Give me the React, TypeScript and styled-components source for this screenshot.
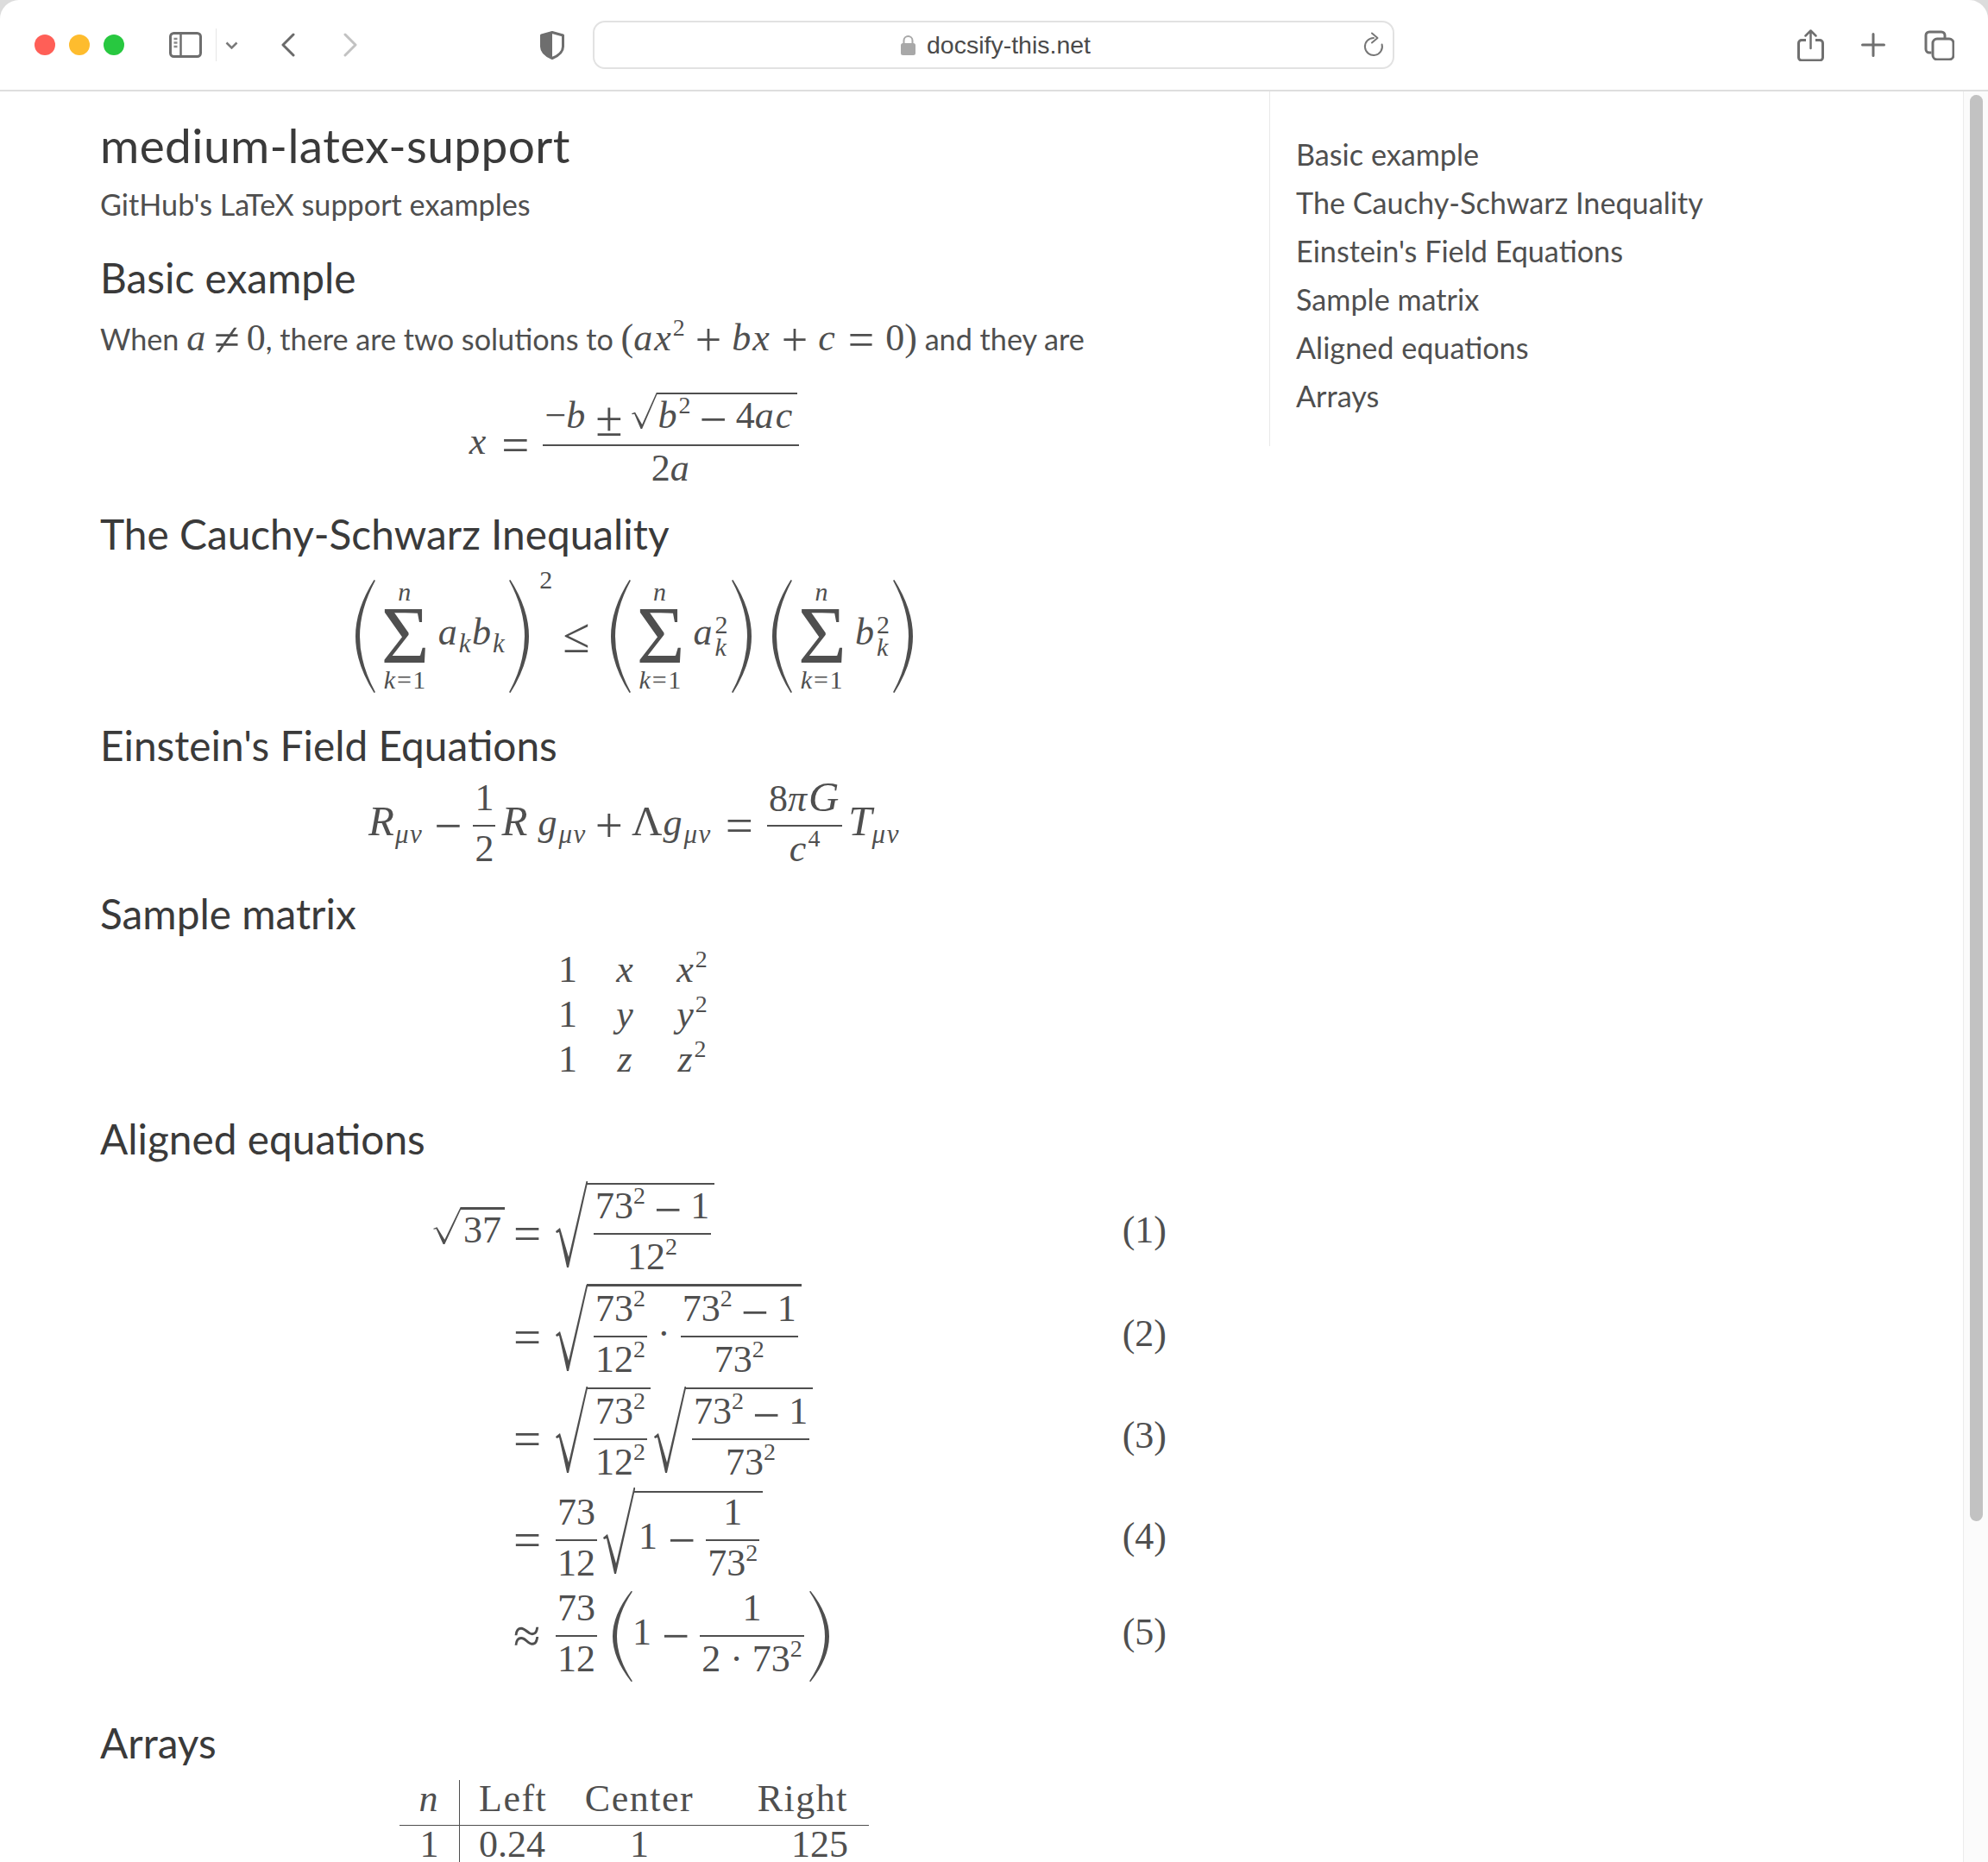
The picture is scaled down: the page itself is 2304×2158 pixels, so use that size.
import React from "react";
import styled, { createGlobalStyle } from "styled-components";

const GlobalStyle = createGlobalStyle`
  html, body {
    margin: 0;
    padding: 0;
    background: #dcdcdc;
  }
`;

const ink = "#4f4f4f";
const textFont = `Lato, "Noto Sans", sans-serif`;
const mathFont = `"Liberation Serif", serif`;

const Page = styled.div`
  width: 2304px;
  height: 2158px;
  overflow: hidden;
  display: flex;
  flex-direction: column;
  background: #fff;
  border-radius: 22px 22px 0 0;
  font-family: ${textFont};
  color: ${ink};
`;

/* browser chrome */
const Toolbar = styled.header`
  flex: none;
  height: 104px;
  box-sizing: content-box;
  border-bottom: 2px solid #dedede;
  display: flex;
  align-items: center;
  padding: 0 39px 0 40px;
`;

const Lights = styled.div`
  display: flex;
  gap: 16px;
`;

const Light = styled.span<{ $color: string }>`
  width: 24px;
  height: 24px;
  border-radius: 50%;
  background: ${(p) => p.$color};
`;

const ToolIcon = styled.svg<{ $left: number }>`
  flex: none;
  margin-left: ${(p) => p.$left}px;
  display: block;
`;

const UrlBar = styled.div`
  flex: none;
  width: 929px;
  height: 56px;
  box-sizing: border-box;
  margin-left: 33px;
  padding-left: 5px;
  border: 2px solid #e2e2e2;
  border-radius: 14px;
  display: flex;
  align-items: center;
  position: relative;
  justify-content: center;
  gap: 13px;
  font-family: "Liberation Sans", sans-serif;
  font-size: 28.5px;
  color: #4a4a4a;
`;

const ReloadWrap = styled.span`
  position: absolute;
  right: 9px;
  top: 9px;
  line-height: 0;
`;

const ToolRight = styled.div`
  margin-left: auto;
  display: flex;
  align-items: center;
`;

/* page */
const Body = styled.div`
  flex: 1;
  display: flex;
  min-height: 0;
`;

const Content = styled.main`
  flex: none;
  width: 1471px;
  box-sizing: border-box;
  padding: 32px 117px 0 116px;
`;

const Title = styled.h1`
  margin: 0 0 17px;
  font-weight: 400;
  font-size: 55px;
  letter-spacing: 0.4px;
  line-height: 60px;
  color: #3a3a3a;
`;

const Subtitle = styled.p`
  margin: 0;
  font-size: 34.2px;
  line-height: 44px;
`;

const Heading = styled.h2<{ $top: number }>`
  margin: ${(p) => p.$top}px 0 0;
  font-weight: 400;
  font-size: 47.8px;
  line-height: 50px;
  color: #3a3a3a;
`;

const Para = styled.p`
  margin: 21px 0 0;
  font-size: 34.2px;
  line-height: 50px;
  white-space: nowrap;
`;

const Toc = styled.nav`
  flex: none;
  align-self: flex-start;
  width: 804px;
  height: 411px;
  box-sizing: border-box;
  padding: 45px 0 0 30px;
  border-left: 1px solid #e8e8e8;
`;

const TocLink = styled.div`
  font-size: 34.2px;
  line-height: 56px;
`;

const Track = styled.div`
  flex: none;
  width: 29px;
  box-sizing: border-box;
  padding: 4px 6px 0 7px;
  background: #fbfbfb;
  border-left: 1px solid #ececec;
`;

const Thumb = styled.div`
  height: 1653px;
  border-radius: 8px;
  background: #c2c2c2;
`;

/* math parts */
const Display = styled.div<{ $h: number; $top: number }>`
  margin-top: ${(p) => p.$top}px;
  height: ${(p) => p.$h}px;
  display: flex;
  align-items: center;
  justify-content: center;
  font-family: ${mathFont};
  font-size: 44px;
  color: ${ink};
`;

const Run = styled.span<{ $left?: number }>`
  display: block;
  flex: none;
  line-height: 44px;
  padding-bottom: 8px;
  padding-left: ${(p) => p.$left ?? 0}px;
  white-space: nowrap;
`;

const I = styled.i`
  font-style: italic;
  letter-spacing: 2px;
`;

const Cap = styled.i<{ $ls: number }>`
  font-style: italic;
  font-size: 49px;
  letter-spacing: ${(p) => p.$ls}px;
`;

const UprightCap = styled.span`
  font-size: 49px;
  letter-spacing: 1px;
`;

const Sup = styled.sup`
  font-size: 28px;
  vertical-align: 17px;
  line-height: 0;
`;

const Sub = styled.sub`
  font-size: 31px;
  font-style: italic;
  letter-spacing: 1.5px;
  vertical-align: -9px;
  line-height: 0;
`;

const Op = styled.span<{ $gap: number }>`
  display: block;
  flex: none;
  font-size: 57px;
  line-height: 44px;
  margin: 0 ${(p) => p.$gap}px;
`;

const Frac = styled.span`
  display: inline-flex;
  flex: none;
  flex-direction: column;
  align-items: stretch;
`;

const Num = styled.span<{ $pad?: number }>`
  display: flex;
  justify-content: center;
  align-items: center;
  height: 56px;
  padding: 0 2px ${(p) => p.$pad ?? 0}px;
  box-sizing: border-box;
  border-bottom: 2px solid ${ink};
  margin-bottom: -1px;
`;

const Den = styled.span`
  display: flex;
  justify-content: center;
  align-items: flex-start;
  height: 56px;
  box-sizing: border-box;
  padding: 5px 2px 0;
`;

const SurdSvg = styled.svg<{ $lift: number }>`
  display: block;
  flex: none;
  margin-bottom: ${(p) => p.$lift * 2}px;
`;

const SqrtBox = styled.span<{ $left: number }>`
  display: inline-flex;
  flex: none;
  align-items: center;
  margin-left: ${(p) => p.$left}px;
`;

const Radicand = styled.span<{ $over: number; $pad: number }>`
  position: relative;
  display: flex;
  align-items: center;
  padding: 0 4px 0 ${(p) => p.$pad}px;

  &::before {
    content: "";
    position: absolute;
    left: -1px;
    right: 0;
    top: ${(p) => p.$over}px;
    height: 2.5px;
    background: ${ink};
  }
`;

const Sqrt: React.FC<{
  w?: number;
  h?: number;
  lift?: number;
  over?: number;
  pad?: number;
  left?: number;
  children: React.ReactNode;
}> = ({ w = 37, h = 100, lift = 11, over = -4, pad = 7, left = 0, children }) => (
  <SqrtBox $left={left}>
    <SurdSvg $lift={lift} width={w} height={h} viewBox="0 0 37 100" preserveAspectRatio="none">
      <path d="M0 58 L5 54 L15 88 L35.5 0 L37 0 L37 2 L15 100 L13 100 L4 59 L1 60 Z" fill={ink} />
    </SurdSvg>
    <Radicand $over={over} $pad={pad}>
      {children}
    </Radicand>
  </SqrtBox>
);

const ParenSvg = styled.svg<{ $flip?: boolean; $left: number; $right: number }>`
  display: block;
  flex: none;
  margin: 0 ${(p) => p.$right}px 0 ${(p) => p.$left}px;
  transform: ${(p) => (p.$flip ? "scaleX(-1)" : "none")};
`;

const Paren: React.FC<{ h: number; flip?: boolean; left?: number; right?: number }> = ({
  h,
  flip,
  left = 0,
  right = 0,
}) => (
  <ParenSvg $flip={flip} $left={left} $right={right} width={23} height={h} viewBox="0 0 23 100" preserveAspectRatio="none">
    <path d="M21.5 0 Q0 26 0 50 Q0 74 21.5 100 L23 99.5 Q5 74 5 50 Q5 26 23 .5 Z" fill={ink} />
  </ParenSvg>
);

const SumBox = styled.span`
  display: flex;
  flex: none;
  flex-direction: column;
  align-items: center;
  width: 60px;
  margin: 0 8px 0 5px;
`;

const SumLimit = styled.span`
  font-size: 30px;
  line-height: 30px;
  letter-spacing: 1.5px;
  white-space: nowrap;
`;

const SumGlyph = styled.span`
  font-size: 96px;
  line-height: 72px;
`;

const Sum: React.FC = () => (
  <SumBox>
    <SumLimit>
      <I>n</I>
    </SumLimit>
    <SumGlyph>Σ</SumGlyph>
    <SumLimit>
      <I>k</I>=1
    </SumLimit>
  </SumBox>
);

const Outer2 = styled.span`
  display: block;
  flex: none;
  font-size: 30px;
  line-height: 30px;
  margin: -10px 12px 0 12px;
  align-self: flex-start;
`;

const ScriptStack = styled.span`
  display: flex;
  flex: none;
  flex-direction: column;
  font-size: 30px;
  line-height: 26px;
  font-style: normal;
  margin-left: 1px;
`;

const InlineMath = styled.span`
  font-family: ${mathFont};
  font-size: 44px;
  line-height: 0;
  white-space: nowrap;
`;

const InlineOp = styled.span<{ $gap: number }>`
  font-size: 54px;
  line-height: 0;
  vertical-align: -6px;
  margin: 0 ${(p) => p.$gap}px;
`;

const InlineSup = styled.sup`
  font-size: 28px;
  line-height: 0;
  vertical-align: 17px;
`;

const Matrix = styled.div`
  margin-top: 14px;
  height: 156px;
  display: grid;
  grid-template-columns: 68px 66px 88px;
  grid-auto-rows: 52px;
  justify-content: center;
  justify-items: center;
  align-items: center;
  font-family: ${mathFont};
  font-size: 44px;
  line-height: 44px;
`;

const AlignedGrid = styled.div`
  margin-top: 25px;
  display: grid;
  grid-template-columns: 479px 1fr auto;
  grid-template-rows: 120px 119px 118px 116px 106px;
  column-gap: 0;
  align-items: center;
  font-family: ${mathFont};
  font-size: 44px;
`;

const Lhs = styled.div`
  display: flex;
  justify-content: flex-end;
  align-items: center;
  padding-right: 10px;
`;

const Rhs = styled.div`
  display: flex;
  align-items: center;
`;

const Tag = styled.div`
  line-height: 44px;
  padding-bottom: 8px;
  padding-right: 2px;
`;

const RelCell = styled.span`
  display: block;
  flex: none;
  width: 49px;
  font-size: 57px;
  line-height: 44px;
`;

const CdotRun = styled(Run)`
  padding-left: 12px;
  padding-right: 12px;
`;

const ArrayTable = styled.div`
  margin-top: 18px;
  display: grid;
  grid-template-columns: 70px 122px 172px 156px 24px;
  grid-template-rows: 53px 50px;
  justify-content: start;
  margin-left: 347px;
  font-family: ${mathFont};
  font-size: 44px;
  line-height: 44px;
`;

const ACell = styled.div<{ $align: string; $head?: boolean; $rule?: boolean; $pad?: number }>`
  text-align: ${(p) => p.$align};
  border-bottom: ${(p) => (p.$head ? `1.5px solid ${ink}` : "none")};
  border-right: ${(p) => (p.$rule ? `1.5px solid ${ink}` : "none")};
  padding-left: ${(p) => p.$pad ?? 0}px;
  letter-spacing: ${(p) => (p.$head ? "1.5px" : "0")};
  white-space: nowrap;
`;

const tocItems = [
  "Basic example",
  "The Cauchy-Schwarz Inequality",
  "Einstein's Field Equations",
  "Sample matrix",
  "Aligned equations",
  "Arrays",
];

const N7 = (
  <>
    73<Sup>2</Sup>
  </>
);
const N12 = (
  <>
    12<Sup>2</Sup>
  </>
);

const Frac732: React.FC = () => (
  <Frac>
    <Num>
      <Run>{N7}</Run>
    </Num>
    <Den>
      <Run>{N12}</Run>
    </Den>
  </Frac>
);

const FracMinus: React.FC<{ den: React.ReactNode }> = ({ den }) => (
  <Frac>
    <Num>
      <Run>{N7}</Run>
      <Op $gap={10}>−</Op>
      <Run>1</Run>
    </Num>
    <Den>
      <Run>{den}</Run>
    </Den>
  </Frac>
);

const Frac7312: React.FC = () => (
  <Frac>
    <Num>
      <Run>73</Run>
    </Num>
    <Den>
      <Run>12</Run>
    </Den>
  </Frac>
);

const App: React.FC = () => {
  return (
    <Page>
      <GlobalStyle />
      <Toolbar>
        <Lights>
          <Light $color="#ff5f57" />
          <Light $color="#febc2e" />
          <Light $color="#28c840" />
        </Lights>
        <ToolIcon $left={52} width="38" height="30" viewBox="0 0 38 30" fill="none">
          <rect x="1.5" y="1.5" width="35" height="27" rx="4" stroke="#6e6e6e" strokeWidth="3" />
          <path d="M13.5 2v26" stroke="#6e6e6e" strokeWidth="2.5" />
          <path d="M5.5 8h4M5.5 12.5h4M5.5 17h4" stroke="#8a8a8a" strokeWidth="2.5" />
        </ToolIcon>
        <ToolIcon $left={16} width="1" height="38" viewBox="0 0 1 38">
          <rect width="1" height="38" fill="#e6e6e6" />
        </ToolIcon>
        <ToolIcon $left={10} width="15" height="9" viewBox="0 0 15 9" fill="none">
          <path d="M1.5 1.5 7.5 7.5 13.5 1.5" stroke="#7a7a7a" strokeWidth="2.5" />
        </ToolIcon>
        <ToolIcon $left={49} width="17" height="28" viewBox="0 0 17 28" fill="none">
          <path d="M15 2 3 14l12 12" stroke="#6a6a6a" strokeWidth="3" strokeLinecap="round" strokeLinejoin="round" />
        </ToolIcon>
        <ToolIcon $left={56} width="17" height="28" viewBox="0 0 17 28" fill="none">
          <path d="M2 2l12 12L2 26" stroke="#c2c2c2" strokeWidth="3" strokeLinecap="round" strokeLinejoin="round" />
        </ToolIcon>
        <ToolIcon $left={211} width="28" height="33" viewBox="0 0 28 33" fill="none">
          <path d="M14 1.5 26.5 5v13c0 6-5 10.5-12.5 13.5C6.5 28.5 1.5 24 1.5 18V5z" stroke="#6e6e6e" strokeWidth="3" strokeLinejoin="round" />
          <path d="M14 1.5 1.5 5v13C1.5 24 6.5 28.5 14 31.5z" fill="#6e6e6e" />
        </ToolIcon>
        <UrlBar>
          <svg width="17" height="23" viewBox="0 0 17 23" fill="none">
            <rect x="0" y="9" width="17" height="14" rx="2.5" fill="#a8a8a8" />
            <path d="M3.5 10V6a5 5 0 0 1 10 0v4" stroke="#a8a8a8" strokeWidth="2" />
          </svg>
          <span>docsify-this.net</span>
          <ReloadWrap>
            <svg width="26" height="32" viewBox="0 0 26 32" fill="none">
              <path d="M13 9A10 10 0 1 0 22.6 16.5" stroke="#777" strokeWidth="2" strokeLinecap="round" />
              <path d="M11 3.5 17.5 9 11 14.5" stroke="#777" strokeWidth="2" strokeLinecap="round" strokeLinejoin="round" />
            </svg>
          </ReloadWrap>
        </UrlBar>
        <ToolRight>
          <ToolIcon $left={0} width="31" height="37" viewBox="0 0 31 37" fill="none">
            <path d="M10 12.5H5A3.5 3.5 0 0 0 1.5 16v16.500A3.5 3.5 0 0 0 5 36h21a3.5 3.5 0 0 0 3.5-3.5V16a3.5 3.5 0 0 0-3.5-3.5h-5" stroke="#707070" strokeWidth="3" />
            <path d="M15.5 22V2M9.5 7.5l6-6 6 6" stroke="#707070" strokeWidth="2.5" strokeLinecap="round" strokeLinejoin="round" />
          </ToolIcon>
          <ToolIcon $left={43} width="28" height="28" viewBox="0 0 28 28" fill="none">
            <path d="M14 1.5v25M1.5 14h25" stroke="#707070" strokeWidth="3" strokeLinecap="round" />
          </ToolIcon>
          <ToolIcon $left={45} width="35" height="35" viewBox="0 0 35 35" fill="none">
            <path d="M8.5 26H6a4 4 0 0 1-4-4V6a4 4 0 0 1 4-4h14a4 4 0 0 1 4 4v3.5" stroke="#707070" strokeWidth="3" />
            <rect x="10" y="10" width="24" height="24" rx="5" stroke="#707070" strokeWidth="3" />
          </ToolIcon>
        </ToolRight>
      </Toolbar>

      <Body>
        <Content>
          <Title>medium-latex-support</Title>
          <Subtitle>GitHub's LaTeX support examples</Subtitle>

          <Heading $top={38}>Basic example</Heading>
          <Para>
            When{" "}
            <InlineMath>
              <I>a</I>
              <InlineOp $gap={8}>≠</InlineOp>0
            </InlineMath>
            , there are two solutions to{" "}
            <InlineMath>
              (<I>ax</I>
              <InlineSup>2</InlineSup>
              <InlineOp $gap={12}>+</InlineOp>
              <I>bx</I>
              <InlineOp $gap={12}>+</InlineOp>
              <I>c</I>
              <InlineOp $gap={13}>=</InlineOp>0)
            </InlineMath>{" "}
            and they are
          </Para>
          <Display $h={120} $top={38}>
            <Run>
              <I>x</I>
            </Run>
            <Op $gap={16}>=</Op>
            <Frac>
              <Num $pad={4}>
                <Run>−<I>b</I></Run>
                <Op $gap={10}>±</Op>
                <Sqrt w={30} h={42} lift={10} over={-5} pad={1}>
                  <Run>
                    <I>b</I>
                    <Sup>2</Sup>
                  </Run>
                  <Op $gap={10}>−</Op>
                  <Run>
                    4<I>ac</I>
                  </Run>
                </Sqrt>
              </Num>
              <Den>
                <Run>
                  2<I>a</I>
                </Run>
              </Den>
            </Frac>
          </Display>

          <Heading $top={18}>The Cauchy-Schwarz Inequality</Heading>
          <Display $h={140} $top={23}>
            <Paren h={131} />
            <Sum />
            <Run>
              <I>a</I>
              <Sub>k</Sub>
              <I>b</I>
              <Sub>k</Sub>
            </Run>
            <Paren h={131} flip left={4} />
            <Outer2>2</Outer2>
            <Op $gap={0}>≤</Op>
            <Paren h={131} left={24} />
            <Sum />
            <Run>
              <I>a</I>
            </Run>
            <ScriptStack>
              <span>2</span>
              <I>k</I>
            </ScriptStack>
            <Paren h={131} flip left={4} />
            <Paren h={131} left={24} />
            <Sum />
            <Run>
              <I>b</I>
            </Run>
            <ScriptStack>
              <span>2</span>
              <I>k</I>
            </ScriptStack>
            <Paren h={131} flip left={4} />
          </Display>

          <Heading $top={32}>Einstein's Field Equations</Heading>
          <Display $h={110} $top={13}>
            <Run>
              <Cap $ls={1}>R</Cap>
              <Sub>μν</Sub>
            </Run>
            <Op $gap={13}>−</Op>
            <Frac>
              <Num>
                <Run>1</Run>
              </Num>
              <Den>
                <Run>2</Run>
              </Den>
            </Frac>
            <Run $left={7}>
              <Cap $ls={1}>R</Cap>&nbsp;<I>g</I>
              <Sub>μν</Sub>
            </Run>
            <Op $gap={10}>+</Op>
            <Run>
              <UprightCap>Λ</UprightCap>
              <I>g</I>
              <Sub>μν</Sub>
            </Run>
            <Op $gap={16}>=</Op>
            <Frac>
              <Num>
                <Run>
                  8<I>π</I>
                  <Cap $ls={2}>G</Cap>
                </Run>
              </Num>
              <Den>
                <Run>
                  <I>c</I>
                  <Sup>4</Sup>
                </Run>
              </Den>
            </Frac>
            <Run $left={7}>
              <Cap $ls={0}>T</Cap>
              <Sub>μν</Sub>
            </Run>
          </Display>

          <Heading $top={22}>Sample matrix</Heading>
          <Matrix>
            <span>1</span>
            <I>x</I>
            <span>
              <I>x</I>
              <Sup>2</Sup>
            </span>
            <span>1</span>
            <I>y</I>
            <span>
              <I>y</I>
              <Sup>2</Sup>
            </span>
            <span>1</span>
            <I>z</I>
            <span>
              <I>z</I>
              <Sup>2</Sup>
            </span>
          </Matrix>

          <Heading $top={41}>Aligned equations</Heading>
          <AlignedGrid>
            <Lhs>
              <Sqrt w={33} h={43} lift={9.5} over={-5} pad={2}>
                <Run>37</Run>
              </Sqrt>
            </Lhs>
            <Rhs>
              <RelCell>=</RelCell>
              <Sqrt>
                <FracMinus den={N12} />
              </Sqrt>
            </Rhs>
            <Tag>(1)</Tag>

            <Lhs />
            <Rhs>
              <RelCell>=</RelCell>
              <Sqrt over={-6}>
                <Frac732 />
                <CdotRun>·</CdotRun>
                <FracMinus den={N7} />
              </Sqrt>
            </Rhs>
            <Tag>(2)</Tag>

            <Lhs />
            <Rhs>
              <RelCell>=</RelCell>
              <Sqrt over={-5}>
                <Frac732 />
              </Sqrt>
              <Sqrt over={-5} left={4}>
                <FracMinus den={N7} />
              </Sqrt>
            </Rhs>
            <Tag>(3)</Tag>

            <Lhs />
            <Rhs>
              <RelCell>=</RelCell>
              <Frac7312 />
              <Sqrt over={-2} pad={4} left={7}>
                <Run>1</Run>
                <Op $gap={12}>−</Op>
                <Frac>
                  <Num>
                    <Run>1</Run>
                  </Num>
                  <Den>
                    <Run>{N7}</Run>
                  </Den>
                </Frac>
              </Sqrt>
            </Rhs>
            <Tag>(4)</Tag>

            <Lhs />
            <Rhs>
              <RelCell>≈</RelCell>
              <Frac7312 />
              <Paren h={105} left={18} />
              <Run>1</Run>
              <Op $gap={12}>−</Op>
              <Frac>
                <Num>
                  <Run>1</Run>
                </Num>
                <Den>
                  <Run>2 · {N7}</Run>
                </Den>
              </Frac>
              <Paren h={105} flip left={6} />
            </Rhs>
            <Tag>(5)</Tag>
          </AlignedGrid>

          <Heading $top={46}>Arrays</Heading>
          <ArrayTable>
            <ACell $align="center" $head $rule>
              <I>n</I>
            </ACell>
            <ACell $align="left" $head $pad={22}>
              Left
            </ACell>
            <ACell $align="center" $head>
              Center
            </ACell>
            <ACell $align="right" $head>
              Right
            </ACell>
            <ACell $align="left" $head />
            <ACell $align="center" $rule>
              1
            </ACell>
            <ACell $align="left" $pad={22}>
              0.24
            </ACell>
            <ACell $align="center">1</ACell>
            <ACell $align="right">125</ACell>
            <ACell $align="left" />
          </ArrayTable>
        </Content>

        <Toc>
          {tocItems.map((item) => (
            <TocLink key={item}>{item}</TocLink>
          ))}
        </Toc>

        <Track>
          <Thumb />
        </Track>
      </Body>
    </Page>
  );
};

export default App;
